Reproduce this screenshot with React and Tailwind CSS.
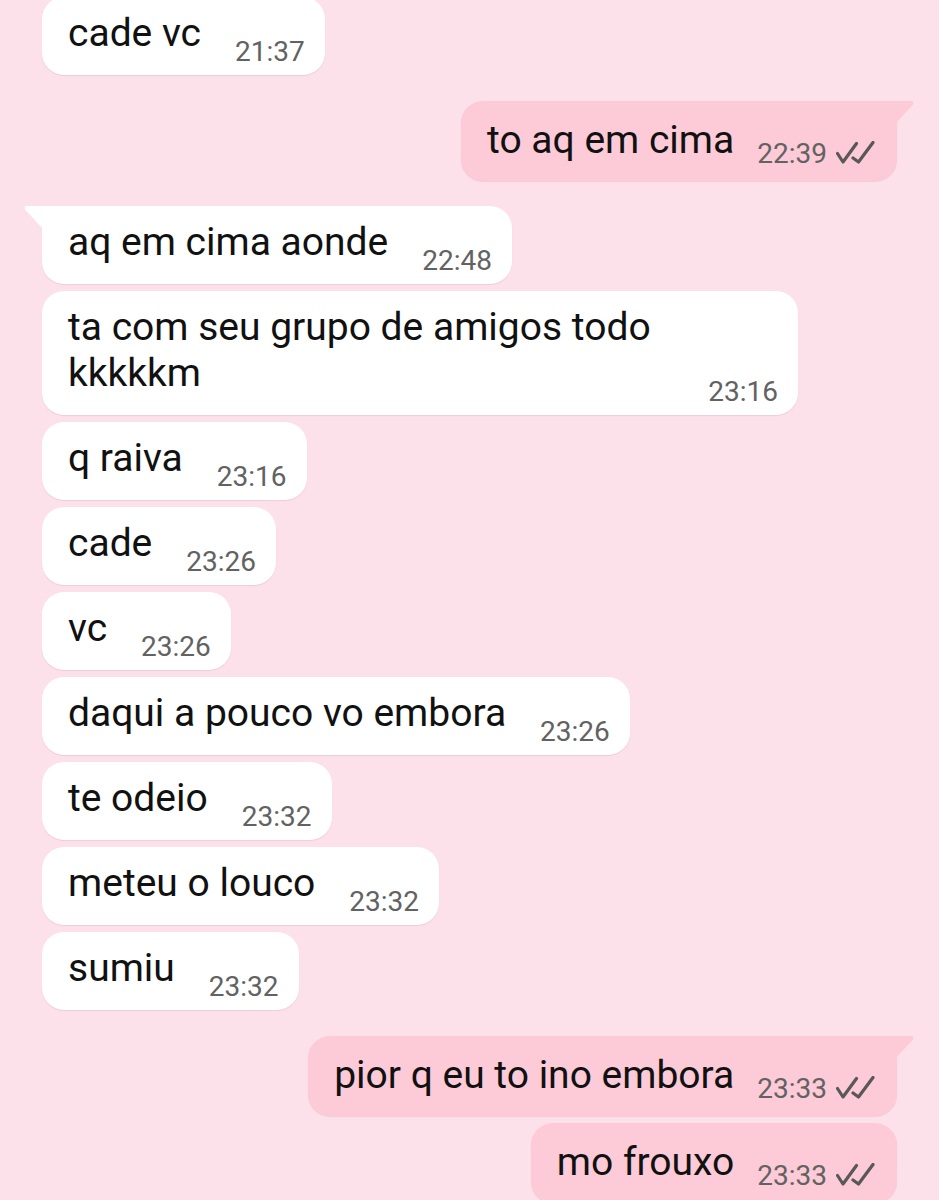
import React from 'react';

const messages = [
    { id: 1, out: false, text: 'cade vc', time: '21:37', first: true, tail: false },
    { id: 2, out: true, text: 'to aq em cima', time: '22:39', tail: true },
    { id: 3, out: false, text: 'aq em cima aonde', time: '22:48', tail: true },
    { id: 4, out: false, lines: ['ta com seu grupo de amigos todo', 'kkkkkm'], time: '23:16' },
    { id: 5, out: false, text: 'q raiva', time: '23:16' },
    { id: 6, out: false, text: 'cade', time: '23:26' },
    { id: 7, out: false, text: 'vc', time: '23:26' },
    { id: 8, out: false, text: 'daqui a pouco vo embora', time: '23:26' },
    { id: 9, out: false, text: 'te odeio', time: '23:32' },
    { id: 10, out: false, text: 'meteu o louco', time: '23:32' },
    { id: 11, out: false, text: 'sumiu', time: '23:32' },
    { id: 12, out: true, text: 'pior q eu to ino embora', time: '23:33', tail: true },
    { id: 13, out: true, text: 'mo frouxo', time: '23:33' },
];

function DoubleCheck() {
    return (
        <svg viewBox="0 0 40 24" className="w-[40px] h-[24px] shrink-0" fill="none" stroke="#585858" strokeWidth="3.2" strokeLinecap="round" strokeLinejoin="round">
            <path d="M1.5 12.5 L7 21 L20.5 2.5" />
            <path d="M17 17 L22.5 21 L37 1.5" />
        </svg>
    );
}

function Bubble({ msg }) {
    const { out, tail, first } = msg;

    // tail sits in the top corner, next to a square corner
    const corner = tail ? (out ? 'rounded-tr-none' : 'rounded-tl-none') : '';
    const spacing = first ? '-mt-[3px]' : tail ? (out ? 'mt-[26px]' : 'mt-[25px]') : 'mt-[7px]';

    return (
        <div className={`flex ${out ? 'justify-end' : 'justify-start'} ${spacing}`}>
            <div
                className={`relative rounded-[22px] shadow-[0_1px_1px_rgba(120,60,80,0.12)] ${corner} ${
                    out ? 'bg-[#fdcad7] pl-[26px] pr-[21px] pt-[16px] pb-[11px]' : 'bg-white pl-[26px] pr-[20px] pt-[13px] pb-[7px]'
                } ${msg.lines ? 'w-[756px]' : ''}`}
            >
                {tail && !out && (
                    <svg viewBox="0 0 20 24" className="absolute top-0 -left-[18px] w-[20px] h-[24px]">
                        <path d="M2.5 0 L20 0 L20 24 L1 3.5 Q0 0 2.5 0 Z" fill="#ffffff" />
                    </svg>
                )}
                {tail && out && (
                    <svg viewBox="0 0 20 24" className="absolute top-0 -right-[17px] w-[20px] h-[24px]">
                        <path d="M0 0 L17.5 0 Q20 0 19 3.5 L0 24 Z" fill="#fdcad7" />
                    </svg>
                )}
                <div className="flex items-end">
                    <div
                        className={`text-[39px] leading-[46px] text-[#111111] whitespace-nowrap ${
                            out ? 'mb-[7px]' : 'mb-[12px]'
                        } ${msg.lines ? 'flex-1' : ''}`}
                    >
                        {msg.lines ? (
                            <>
                                {msg.lines[0]}
                                <br />
                                {msg.lines[1]}
                            </>
                        ) : (
                            msg.text
                        )}
                    </div>
                    <div className={`flex items-center ${out ? 'ml-[23px]' : 'ml-[34px]'}`}>
                        <span className="text-[28px] leading-[33px] text-[#626262]">{msg.time}</span>
                        {out && (
                            <span className="ml-[9px] mb-[2px]">
                                <DoubleCheck />
                            </span>
                        )}
                    </div>
                </div>
            </div>
        </div>
    );
}

export default function App() {
    return (
        <div
            className="w-[939px] h-[1200px] overflow-hidden bg-[#fde1ea] px-[42px]"
            style={{ fontFamily: 'Roboto, "Noto Sans", "Liberation Sans", sans-serif' }}
        >
            {messages.map((msg) => (
                <Bubble key={msg.id} msg={msg} />
            ))}
        </div>
    );
}
